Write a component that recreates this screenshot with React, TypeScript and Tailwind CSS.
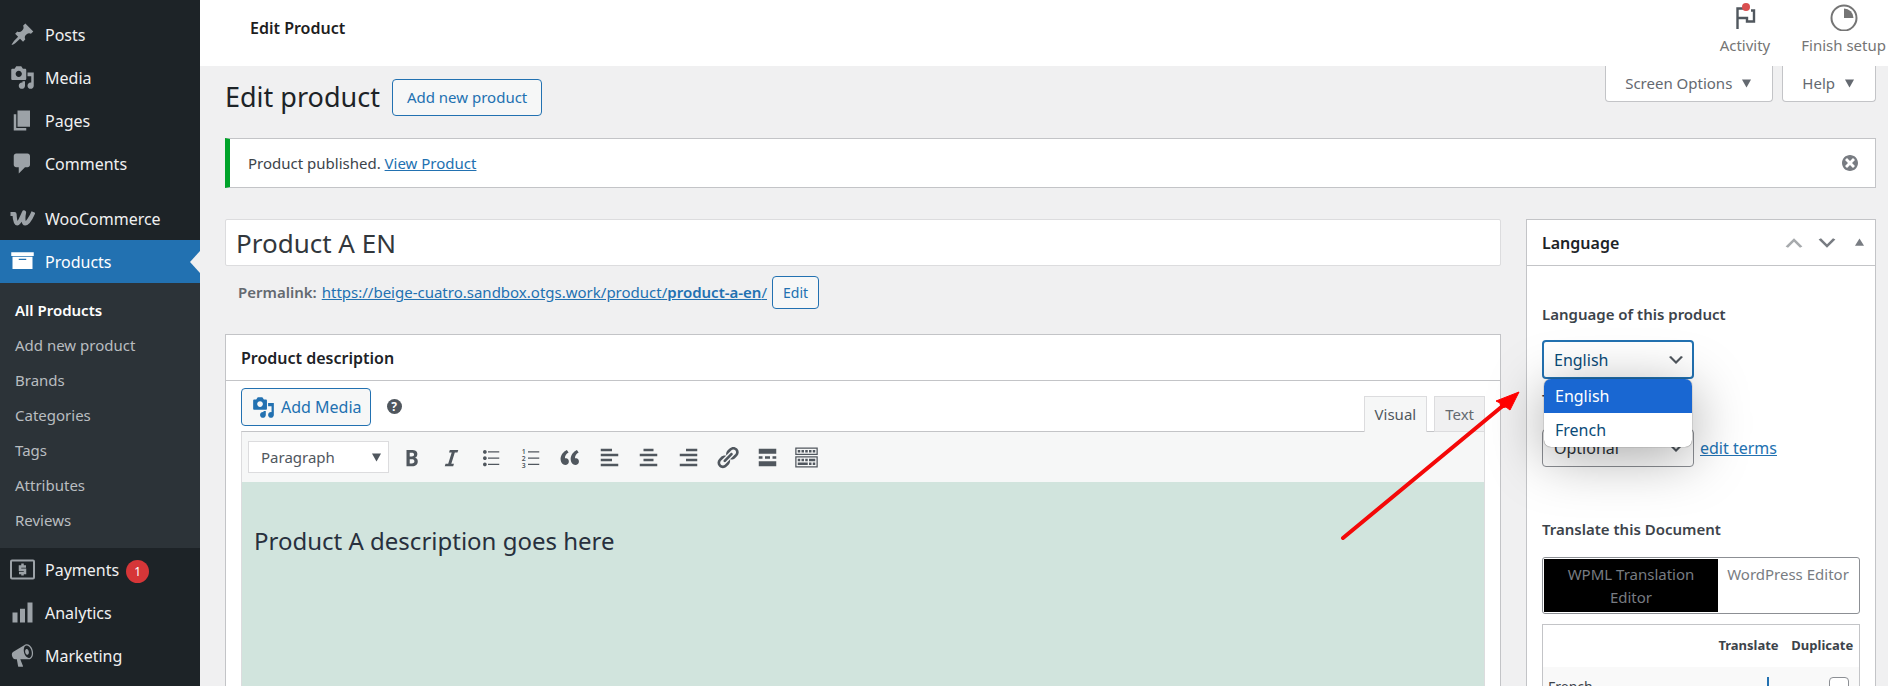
import type { ReactNode } from "react"

const icons = {
    post: "M10.44 3.02l1.82-1.82 6.36 6.35-1.83 1.82c-1.05-.68-2.48-.57-3.41.36l-.75.75c-.92.93-1.04 2.35-.35 3.41l-1.83 1.82-2.41-2.41-2.8 2.79c-.42.42-3.38 2.71-3.8 2.29s1.86-3.39 2.28-3.81l2.79-2.79L4.1 9.36l1.83-1.82c1.05.69 2.48.57 3.4-.36l.75-.75c.93-.92 1.05-2.35.36-3.41z",
    media: "M13 11V4c0-.55-.45-1-1-1h-1.67L9 1H5L3.67 3H2c-.55 0-1 .45-1 1v7c0 .55.45 1 1 1h10c.55 0 1-.45 1-1zM7 4.5c1.38 0 2.5 1.12 2.5 2.5S8.38 9.5 7 9.5 4.5 8.38 4.5 7 5.62 4.5 7 4.5zM14 6h5v10.5c0 1.38-1.12 2.5-2.5 2.5S14 17.88 14 16.5s1.12-2.5 2.5-2.5c.17 0 .34.02.5.05V9h-3V6zm-4 8.05V13h2v3.5c0 1.38-1.12 2.5-2.5 2.5S7 17.88 7 16.5 8.12 14 9.5 14c.17 0 .34.02.5.05z",
    page: "M6 15V2h10v13H6zm-1 1h8v2H3V5h2v11z",
    comments: "M5 2h9c1.1 0 2 .9 2 2v7c0 1.1-.9 2-2 2h-2l-5 5v-5H5c-1.1 0-2-.9-2-2V4c0-1.1.9-2 2-2z",
    products: "M1 2.5h18v3H1zM2 6.2h16V16H2zM7 7.8v1h6v-1z",
    chart: "M18 18V2h-4v16h4zm-6 0V7H8v11h4zm-6 0v-8H2v8h4z",
    megaphone: "M18.15 5.94c.46 1.62.38 3.22-.02 4.48-.42 1.28-1.26 2.18-2.3 2.48-.16.06-.26.06-.4.06-.06.02-.12.02-.18.02-.06.02-.14.02-.22.02h-6.8l2.22 5.5c.02.14-.06.26-.14.34-.08.1-.24.16-.34.16H6.95c-.1 0-.26-.06-.34-.16-.08-.08-.16-.2-.14-.34l-1-5.5H4.25l-.02-.02c-.5.06-1.08-.18-1.54-.62s-.88-1.08-1.06-1.88c-.24-.8-.2-1.56-.02-2.2.18-.62.58-1.08 1.06-1.3l.02-.02 9-5.4c.1-.06.18-.1.24-.16.06-.04.14-.08.24-.12.16-.08.28-.12.5-.18 1.04-.3 2.24.1 3.22.98s1.84 2.24 2.26 3.86zm-2.58 5.98h-.02c.4-.1.74-.34 1.04-.7.58-.7.86-1.76.86-3.04 0-.64-.1-1.3-.28-1.98-.34-1.36-1.02-2.5-1.78-3.24s-1.68-1.1-2.46-.88c-.82.22-1.4.96-1.7 2-.32 1.04-.28 2.36.06 3.72.38 1.36 1 2.5 1.8 3.24.78.74 1.62 1.1 2.48.88zm-2.54-7.08c.22-.04.42-.02.62.04.38.16.76.48 1.02 1s.42 1.2.42 1.78c0 .3-.04.56-.12.8-.18.48-.44.84-.86.94-.34.1-.8-.06-1.14-.4s-.64-.86-.78-1.5c-.18-.62-.12-1.24.02-1.72s.48-.84.82-.94z",
    bold: "M6 4v13h4.54c1.37 0 2.46-.33 3.26-1 .8-.66 1.2-1.58 1.2-2.77 0-.84-.17-1.51-.51-2.01s-.9-.85-1.67-1.03v-.09c.57-.1 1.02-.4 1.36-.9s.51-1.13.51-1.91c0-1.14-.39-1.98-1.17-2.5C12.75 4.26 11.5 4 9.78 4H6zm2.57 5.15V6.26h1.36c.73 0 1.27.11 1.61.32.34.22.51.58.51 1.07 0 .54-.16.92-.47 1.15s-.82.35-1.51.35h-1.5zm0 2.19h1.6c1.44 0 2.16.53 2.16 1.61 0 .6-.17 1.05-.51 1.34s-.86.43-1.57.43H8.57v-3.38z",
    italic: "M14.78 6h-2.13l-2.8 9h2.12l-.62 2H4.6l.62-2h2.14l2.8-9H8.03l.62-2h6.75z",
    ul: "M5.5 7C4.67 7 4 6.33 4 5.5 4 4.68 4.67 4 5.5 4 6.32 4 7 4.68 7 5.5 7 6.33 6.32 7 5.5 7zM8 5h9v1H8V5zm-2.5 7c-.83 0-1.5-.67-1.5-1.5C4 9.68 4.67 9 5.5 9c.82 0 1.5.68 1.5 1.5 0 .83-.68 1.5-1.5 1.5zM8 10h9v1H8v-1zm-2.5 7c-.83 0-1.5-.67-1.5-1.5 0-.82.67-1.5 1.5-1.5.82 0 1.5.68 1.5 1.5 0 .83-.68 1.5-1.5 1.5zM8 15h9v1H8v-1z",
    quote: "M9.49 13.22c0-.74-.2-1.38-.61-1.9-.62-.78-1.83-.88-2.53-.72-.29-1.65 1.11-3.75 2.92-4.65L7.88 4c-2.73 1.3-5.42 4.28-4.96 8.05C3.21 14.43 4.59 16 6.54 16c.85 0 1.56-.25 2.12-.75s.83-1.18.83-2.03zm8.05 0c0-.74-.2-1.38-.61-1.9-.63-.78-1.83-.88-2.53-.72-.29-1.65 1.11-3.75 2.92-4.65L15.93 4c-2.73 1.3-5.41 4.28-4.95 8.05.29 2.38 1.66 3.95 3.61 3.95.85 0 1.56-.25 2.12-.75s.83-1.18.83-2.03z",
    left: "M12 5V3H3v2h9zm5 4V7H3v2h14zm-5 4v-2H3v2h9zm5 4v-2H3v2h14z",
    center: "M14 5V3H6v2h8zm3 4V7H3v2h14zm-3 4v-2H6v2h8zm3 4v-2H3v2h14z",
    right: "M17 5V3H8v2h9zm0 4V7H3v2h14zm0 4v-2H8v2h9zm0 4v-2H3v2h14z",
    link: "M17.74 2.76c1.68 1.69 1.68 4.41 0 6.1l-1.53 1.52c-1.12 1.12-2.7 1.47-4.14 1.09l2.62-2.61.76-.77.76-.76c.84-.84.84-2.2 0-3.04-.84-.85-2.2-.85-3.04 0l-.77.76-3.38 3.38c-.37-1.44-.02-3.02 1.1-4.14l1.52-1.53c1.69-1.68 4.42-1.68 6.1 0zM8.59 13.43l5.34-5.34c.42-.42.42-1.1 0-1.52-.44-.43-1.13-.39-1.53 0l-5.33 5.34c-.42.42-.42 1.1 0 1.52.44.43 1.13.39 1.52 0zm-.76 2.29l4.14-4.15c.38 1.44.03 3.02-1.09 4.14l-1.52 1.53c-1.69 1.68-4.41 1.68-6.1 0-1.68-1.68-1.68-4.42 0-6.1l1.53-1.52c1.12-1.12 2.7-1.47 4.14-1.1l-4.14 4.15c-.85.84-.85 2.2 0 3.05.84.84 2.2.84 3.04 0z",
    more: "M17 7V3H3v4h14zM6 11V9H3v2h3zm6 0V9H8v2h4zm5 0V9h-3v2h3zm0 6v-4H3v4h14z",
    kitchen: "M19 2v6H1V2h18zm-1 5V3H2v4h16zM5 4v2H3V4h2zm3 0v2H6V4h2zm3 0v2H9V4h2zm3 0v2h-2V4h2zm3 0v2h-2V4h2zm2 5v9H1V9h18zm-1 8v-7H2v7h16zM5 11v2H3v-2h2zm3 0v2H6v-2h2zm3 0v2H9v-2h2zm6 0v2h-5v-2h5zm-6 3v2H3v-2h8zm3 0v2h-2v-2h2zm3 0v2h-2v-2h2z",
    dismiss: "M10 2c4.42 0 8 3.58 8 8s-3.58 8-8 8-8-3.58-8-8 3.58-8 8-8zm5 11l-3-3 3-3-2-2-3 3-3-3-2 2 3 3-3 3 2 2 3-3 3 3z",
    chevron: "M5 6l5 5 5-5 2 1-7 7-7-7 2-1z",
    down: "M3 4h14l-7 12z",
    up: "M3 15h14L10 4z",
}

function Icon({ name, className = "size-[25px]" }: { name: keyof typeof icons; className?: string }) {
    return (
        <svg viewBox="0 0 20 20" fill="currentColor" fillRule="evenodd" className={`shrink-0 ${className}`} aria-hidden="true">
            <path d={icons[name]} />
        </svg>
    )
}

function WooIcon() {
    return (
        <svg viewBox="0 0 25 25" className="size-[25px] shrink-0" fill="none" stroke="currentColor" strokeWidth="4.200" strokeLinejoin="round" aria-hidden="true">
            <path d="M.5 8H4.500C4.700 12 5.200 17.500 7.200 17.500S12 11 14 6.500C13 11 13 17.500 15.200 17.500S21 12 23.500 6" />
        </svg>
    )
}

function PaymentsIcon() {
    return (
        <svg viewBox="0 0 25 25" className="size-[25px] shrink-0" fill="none" stroke="currentColor" strokeWidth="2" aria-hidden="true">
            <rect x="1" y="3.500" width="23" height="18" rx="1" />
            <path d="M16 9.500h-6v3.200h5v3.300H9M12.500 6.500v3M12.500 16v2.500" strokeWidth="2.500" />
        </svg>
    )
}

function MenuItem({ icon, label, badge }: { icon: ReactNode; label: string; badge?: string }) {
    return (
        <li>
            <a href="#" className="flex h-[43px] items-center pl-[10px] text-base text-[#f0f0f1]">
                <span className="text-[#9ca2a7]">{icon}</span>
                <span className="pl-[10px]">{label}</span>
                {badge && (
                    <span className="ml-[7px] mt-1 flex size-[23px] items-center justify-center rounded-full bg-[#d63638] text-xs text-white">{badge}</span>
                )}
            </a>
        </li>
    )
}

const subItems = ["All Products", "Add new product", "Brands", "Categories", "Tags", "Attributes", "Reviews"]

function Sidebar() {
    return (
        <nav className="w-[200px] shrink-0 bg-[#1d2327] pt-[13px]">
            <ul>
                <MenuItem icon={<Icon name="post" />} label="Posts" />
                <MenuItem icon={<Icon name="media" />} label="Media" />
                <MenuItem icon={<Icon name="page" />} label="Pages" />
                <MenuItem icon={<Icon name="comments" />} label="Comments" />
                <li className="h-3" />
                <MenuItem icon={<WooIcon />} label="WooCommerce" />
                <li>
                    <a href="#" className="flex h-[43px] items-center justify-between bg-[#2271b1] pl-[10px] text-base text-white">
                        <span className="flex items-center gap-[10px]">
                            <Icon name="products" />
                            Products
                        </span>
                        <svg viewBox="0 0 10 22" className="h-[22px] w-[10px]" aria-hidden="true">
                            <path d="M10 0v22L0 11z" fill="#f0f0f1" />
                        </svg>
                    </a>
                    <ul className="bg-[#2c3338] py-[10px]">
                        {subItems.map((item, i) => (
                            <li key={item}>
                                <a
                                    href="#"
                                    className={i === 0 ? "flex h-[35px] items-center pl-[15px] text-[15px] font-semibold text-white" : "flex h-[35px] items-center pl-[15px] text-[15px] text-[#b9bdc0]"}
                                >
                                    {item}
                                </a>
                            </li>
                        ))}
                    </ul>
                </li>
                <MenuItem icon={<PaymentsIcon />} label="Payments" badge="1" />
                <MenuItem icon={<Icon name="chart" />} label="Analytics" />
                <MenuItem icon={<Icon name="megaphone" />} label="Marketing" />
            </ul>
        </nav>
    )
}

function TopBar() {
    return (
        <header className="flex h-[66px] shrink-0 justify-between bg-white pl-[50px] pr-[2px]">
            <h2 className="pt-4 text-base leading-6 font-semibold text-[#1e1e1e]">Edit Product</h2>
            <div className="flex items-start gap-[31px] pt-[3px] text-[15px] leading-6 text-[#757575]">
                <button className="flex flex-col items-center gap-[2px]">
                    <svg viewBox="0 0 28 28" className="size-7" fill="none" aria-hidden="true">
                        <path d="M6.500 26V5.500H13M20 7.500h3v11h-7V15H6.500" stroke="#50575e" strokeWidth="2.400" />
                        <circle cx="15" cy="4" r="4" fill="#d94f4f" />
                    </svg>
                    Activity
                </button>
                <button className="flex flex-col items-center gap-[2px]">
                    <svg viewBox="0 0 28 28" className="size-7" fill="none" aria-hidden="true">
                        <circle cx="14" cy="15" r="12.500" stroke="#757575" strokeWidth="2" />
                        <path d="M14 5.500a9.500 9.500 0 0 1 9.500 9.500H14z" fill="#757575" />
                    </svg>
                    Finish setup
                </button>
            </div>
        </header>
    )
}

const tools: { name: keyof typeof icons | "ol"; label: string }[] = [
    { name: "bold", label: "Bold" },
    { name: "italic", label: "Italic" },
    { name: "ul", label: "Bulleted list" },
    { name: "ol", label: "Numbered list" },
    { name: "quote", label: "Blockquote" },
    { name: "left", label: "Align left" },
    { name: "center", label: "Align center" },
    { name: "right", label: "Align right" },
    { name: "link", label: "Insert link" },
    { name: "more", label: "Read more" },
    { name: "kitchen", label: "Toolbar toggle" },
]

function OlIcon() {
    return (
        <svg viewBox="0 0 20 20" className="size-[25px]" fill="currentColor" aria-hidden="true">
            <path d="M8 5h9v1H8zM8 10h9v1H8zM8 15h9v1H8z" />
            <g fontSize="5.500" fontWeight="600">
                <text x="3" y="7">1</text>
                <text x="3" y="12.500">2</text>
                <text x="3" y="18">3</text>
            </g>
        </svg>
    )
}

function Editor() {
    return (
        <section className="mt-[25px] flex flex-1 flex-col border border-[#c3c4c7] bg-white">
            <h2 className="flex h-[46px] items-center border-b border-[#c3c4c7] px-[15px] text-base font-semibold text-[#1d2327]">Product description</h2>
            <div className="flex flex-1 flex-col px-[15px] pt-[7px]">
                <div className="flex justify-between">
                    <div className="flex h-[43px] items-start gap-4">
                        <button className="flex h-[38px] items-center gap-[6px] rounded-[4px] border border-[#2271b1] bg-[#f6f7f7] pr-2 pl-[10px] text-base text-[#2271b1]">
                            <Icon name="media" className="size-[23px]" />
                            Add Media
                        </button>
                        <button aria-label="Help" className="mt-[11px] flex size-[15px] items-center justify-center rounded-full bg-[#50575e] text-xs font-bold text-white">?</button>
                    </div>
                    <div className="z-10 -mb-px flex items-end gap-[7px] text-[15px]">
                        <button className="h-9 border border-b-0 border-[#dcdcde] bg-[#f6f7f7] px-[10px] text-[#50575e]">Visual</button>
                        <button className="h-9 border border-[#dcdcde] bg-[#f0f0f1] px-[10px] text-[#646970]">Text</button>
                    </div>
                </div>
                <div className="flex flex-1 flex-col border-x border-t border-x-[#dcdcde] border-t-[#c3c4c7]">
                    <div className="flex h-[50px] items-center bg-[#f6f7f7] pl-[6px] text-[#50575e]">
                        <div className="grid w-[141px] items-center">
                            <select aria-label="Format" className="col-start-1 row-start-1 h-8 appearance-none border border-[#dcdcde] bg-white pl-3 text-[15px]">
                                <option>Paragraph</option>
                            </select>
                            <Icon name="down" className="pointer-events-none col-start-1 row-start-1 mr-[6px] size-[13px] justify-self-end" />
                        </div>
                        <div className="ml-[10px] flex w-[420px] justify-between">
                            {tools.map((tool) => (
                                <button key={tool.name} aria-label={tool.label}>
                                    {tool.name === "ol" ? <OlIcon /> : <Icon name={tool.name} />}
                                </button>
                            ))}
                        </div>
                    </div>
                    <div className="flex-1 bg-[#d1e4dd] px-3 pt-[43px] text-2xl text-[#28303d]">
                        <p>Product A description goes here</p>
                    </div>
                </div>
            </div>
        </section>
    )
}

function Arrow() {
    return (
        <svg viewBox="0 0 184 156" className="pointer-events-none absolute top-12 right-full z-20 mr-[21px] h-[156px] w-[184px]" aria-hidden="true">
            <path d="M6 150L168 16" stroke="#f40808" strokeWidth="4" strokeLinecap="round" />
            <path d="M182 4L173 22l-4-3-5 1-1-5-4-2z" fill="#ff0000" stroke="#ff0000" />
        </svg>
    )
}

function LanguageBox() {
    return (
        <aside className="w-[350px] shrink-0 self-stretch border border-[#c3c4c7] bg-white text-[#3c434a]">
            <div className="flex h-[46px] items-center justify-between border-b border-[#c3c4c7] pr-[9px] pl-[15px]">
                <h2 className="text-base font-semibold text-[#1d2327]">Language</h2>
                <div className="flex items-center text-[#787c82]">
                    <button aria-label="Move up" className="mr-[9px] text-[#a7aaad]">
                        <Icon name="chevron" className="size-6 rotate-180" />
                    </button>
                    <button aria-label="Move down" className="mr-[14px]">
                        <Icon name="chevron" className="size-6" />
                    </button>
                    <button aria-label="Toggle panel">
                        <Icon name="up" className="size-[13px]" />
                    </button>
                </div>
            </div>
            <div className="px-[15px] pt-9">
                <label htmlFor="language" className="block text-[15px] leading-6 font-semibold">Language of this product</label>
                <div className="relative mt-[14px] w-[152px]">
                    <div className="grid items-center">
                        <select id="language" className="col-start-1 row-start-1 h-[39px] appearance-none rounded-[4px] border-2 border-[#2271b1] bg-white pl-[10px] text-base text-[#0a4b78]">
                            <option>English</option>
                            <option>French</option>
                        </select>
                        <Icon name="chevron" className="pointer-events-none col-start-1 row-start-1 mr-2 size-5 justify-self-end text-[#50575e]" />
                    </div>
                    <ul className="absolute top-full left-[2px] z-10 w-[148px] overflow-hidden rounded-[7px] bg-white text-base text-[#0a4b78] shadow-[0_10px_55px_rgba(0,0,0,0.35),0_0_1px_rgba(0,0,0,0.8)]">
                        <li className="flex h-[34px] items-center bg-[#1967d2] pl-[11px] text-white">English</li>
                        <li className="flex h-[34px] items-center pl-[11px]">French</li>
                    </ul>
                    <Arrow />
                </div>
                <label htmlFor="terms" className="mt-2 block text-[15px] leading-6 font-semibold">Terms</label>
                <div className="mt-[18px] flex items-center gap-[6px]">
                    <div className="grid w-[152px] items-center">
                        <select id="terms" className="col-start-1 row-start-1 h-[38px] appearance-none rounded-[4px] border border-[#8c8f94] bg-white pl-[11px] text-base text-[#2c3338]">
                            <option>Optional</option>
                        </select>
                        <Icon name="chevron" className="pointer-events-none col-start-1 row-start-1 mr-2 size-5 justify-self-end text-[#50575e]" />
                    </div>
                    <a href="#" className="text-base text-[#2271b1] underline">edit terms</a>
                </div>
                <h3 className="mt-[50px] text-[15px] leading-6 font-semibold">Translate this Document</h3>
                <div className="mt-4 flex rounded-[3px] border border-[#8c8f94] p-px text-[15px] leading-[23px] text-[#787c82]">
                    <button className="w-[174px] bg-black px-4 pt-1 pb-[3px]">WPML Translation Editor</button>
                    <button className="flex-1 self-start pt-1 whitespace-nowrap">WordPress Editor</button>
                </div>
                <table className="mt-[10px] w-full border border-[#c3c4c7] text-sm">
                    <thead>
                        <tr className="h-[42px]">
                            <th aria-label="Language" />
                            <th className="w-[82px] text-[13px]">Translate</th>
                            <th className="w-[70px] pr-1 text-[13px]">Duplicate</th>
                        </tr>
                    </thead>
                    <tbody>
                        <tr className="h-[42px] bg-[#f9f9f9]">
                            <td className="pl-[5px]">French</td>
                            <td className="pr-3">
                                <button aria-label="Add French translation" className="flex w-full justify-end">
                                    <svg viewBox="0 0 20 20" className="size-5" stroke="#2271b1" strokeWidth="2" aria-hidden="true">
                                        <path d="M10 0v20M0 10h20" />
                                    </svg>
                                </button>
                            </td>
                            <td className="pr-[10px]">
                                <input type="checkbox" aria-label="Duplicate to French" className="ml-auto block size-5 appearance-none rounded-[4px] border border-[#8c8f94] bg-white" />
                            </td>
                        </tr>
                    </tbody>
                </table>
            </div>
        </aside>
    )
}

function App() {
    return (
        <div className="flex h-screen overflow-hidden bg-[#f0f0f1] font-['Noto_Sans','Open_Sans',sans-serif] text-[15px] text-[#3c434a]">
            <Sidebar />
            <main className="flex min-w-0 flex-1 flex-col">
                <TopBar />
                <div className="flex flex-1 flex-col pr-3 pl-[25px]">
                    <div className="flex justify-between">
                        <div className="flex items-start gap-3 pt-[13px]">
                            <h1 className="text-[27px] leading-9 text-[#1d2327]">Edit product</h1>
                            <button className="h-[37px] rounded-[4px] border border-[#2271b1] bg-[#f6f7f7] px-[14px] text-[15px] text-[#2271b1]">Add new product</button>
                        </div>
                        <div className="flex items-start gap-[9px] text-[15px] text-[#646970]">
                            <button className="flex h-9 items-center gap-2 rounded-b-[4px] border border-t-0 border-[#c3c4c7] bg-white px-[19px]">
                                Screen Options
                                <Icon name="down" className="size-[13px]" />
                            </button>
                            <button className="flex h-9 items-center gap-2 rounded-b-[4px] border border-t-0 border-[#c3c4c7] bg-white px-[19px]">
                                Help
                                <Icon name="down" className="size-[13px]" />
                            </button>
                        </div>
                    </div>
                    <div className="mt-[22px] flex h-[50px] items-center justify-between border border-l-[5px] border-[#c3c4c7] border-l-[#00a32a] bg-white pr-[15px] pl-[18px]">
                        <p>
                            Product published. <a href="#" className="text-[#2271b1] underline">View Product</a>
                        </p>
                        <button aria-label="Dismiss this notice" className="text-[#787c82]">
                            <Icon name="dismiss" className="size-5" />
                        </button>
                    </div>
                    <div className="mt-[31px] flex flex-1 gap-[25px]">
                        <div className="flex min-w-0 flex-1 flex-col">
                            <input
                                aria-label="Product name"
                                defaultValue="Product A EN"
                                className="h-[47px] rounded-[2px] border border-[#dcdcde] bg-white px-[10px] text-[26px] text-[#32373c]"
                            />
                            <div className="mt-[10px] flex h-[33px] items-center gap-[5px] pl-[13px] text-[#646970]">
                                <strong className="font-semibold">Permalink:</strong>
                                <a href="#" className="text-[#2271b1] underline">
                                    https://beige-cuatro.sandbox.otgs.work/product/<span className="font-semibold">product-a-en</span>/
                                </a>
                                <button className="h-[33px] rounded-[4px] border border-[#2271b1] bg-[#f6f7f7] px-[10px] text-sm text-[#2271b1]">Edit</button>
                            </div>
                            <Editor />
                        </div>
                        <LanguageBox />
                    </div>
                </div>
            </main>
        </div>
    )
}

export default App
